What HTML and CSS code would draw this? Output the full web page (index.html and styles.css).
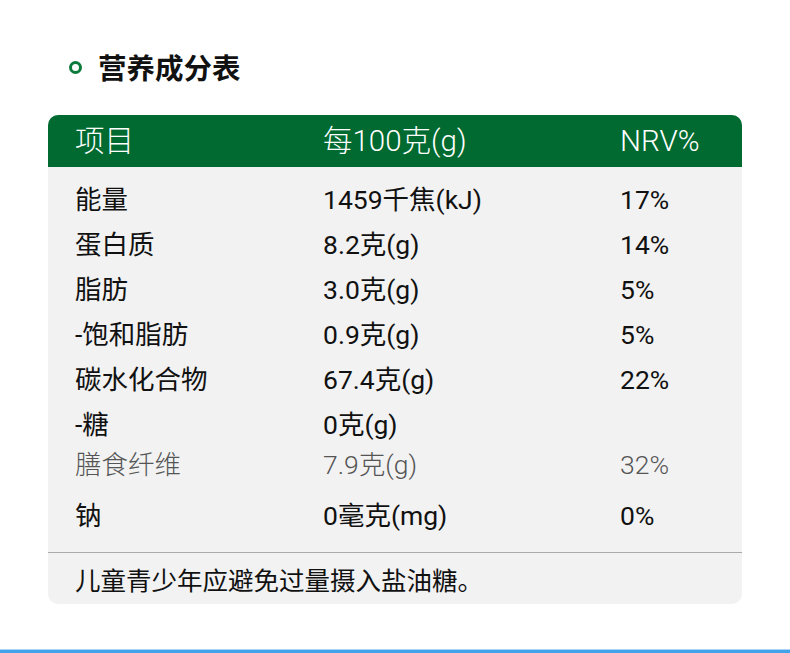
FILE: index.html
```html
<!DOCTYPE html>
<html lang="zh-CN">
<head>
<meta charset="utf-8">
<title>营养成分表</title>
<link rel="stylesheet" href="styles.css">
</head>
<body>
<div class="page">
  <h1 class="title">
    <span class="dot"></span>
    <span>营养成分表</span>
  </h1>
  <div class="card">
    <div class="row head">
      <div>项目</div><div>每100克(g)</div><div>NRV%</div>
    </div>
    <div class="body">
      <div class="row"><div>能量</div><div>1459千焦(kJ)</div><div>17%</div></div>
      <div class="row"><div>蛋白质</div><div>8.2克(g)</div><div>14%</div></div>
      <div class="row"><div>脂肪</div><div>3.0克(g)</div><div>5%</div></div>
      <div class="row"><div>-饱和脂肪</div><div>0.9克(g)</div><div>5%</div></div>
      <div class="row"><div>碳水化合物</div><div>67.4克(g)</div><div>22%</div></div>
      <div class="row"><div>-糖</div><div>0克(g)</div><div></div></div>
      <div class="row light"><div>膳食纤维</div><div>7.9克(g)</div><div>32%</div></div>
      <div class="row last"><div>钠</div><div>0毫克(mg)</div><div>0%</div></div>
    </div>
    <div class="foot">儿童青少年应避免过量摄入盐油糖。</div>
  </div>
</div>
<div class="bottom-line"></div>
</body>
</html>
```

FILE: styles.css
```css
html, body {
  margin: 0;
  padding: 0;
  background: #ffffff;
  font-family: Roboto, "Noto Sans CJK SC", sans-serif;
  color: #111;
}
.page {
  height: 649px;
  padding: 0 48px;
  box-sizing: border-box;
  overflow: hidden;
}
.title {
  margin: 0;
  padding-top: 47px;
  height: 40px;
  box-sizing: content-box;
  display: flex;
  align-items: center;
  gap: 16px;
  padding-left: 21px;
  font-family: "Noto Sans CJK SC", sans-serif;
  font-size: 28.5px;
  font-weight: 700;
  line-height: 40px;
  color: #111;
}
.dot {
  width: 7px;
  height: 7px;
  border: 3px solid #0b7a3b;
  border-radius: 50%;
  flex: none;
}
.card {
  margin-top: 28px;
  background: #f2f2f2;
  border-radius: 10px;
  overflow: hidden;
}
.row {
  display: grid;
  grid-template-columns: 248px 297px 1fr;
  padding-left: 27px;
  height: 45px;
  align-items: center;
  font-size: 26.5px;
  line-height: 30px;
}
.head {
  height: 52px;
  background: #006a30;
  color: #fff;
  font-weight: 300;
  font-size: 29.5px;
}
.body {
  padding: 10px 0 14px;
  border-bottom: 1px solid #aaaaaa;
}
.light {
  height: 36px;
  color: #555;
  font-weight: 300;
}
.last {
  margin-top: 10px;
}
.foot {
  height: 51px;
  display: flex;
  align-items: center;
  padding-left: 27px;
  font-size: 25.5px;
}
.bottom-line {
  height: 4px;
  border-top: 1px solid #a9d4f6;
  background: #42a3eb;
}
```
